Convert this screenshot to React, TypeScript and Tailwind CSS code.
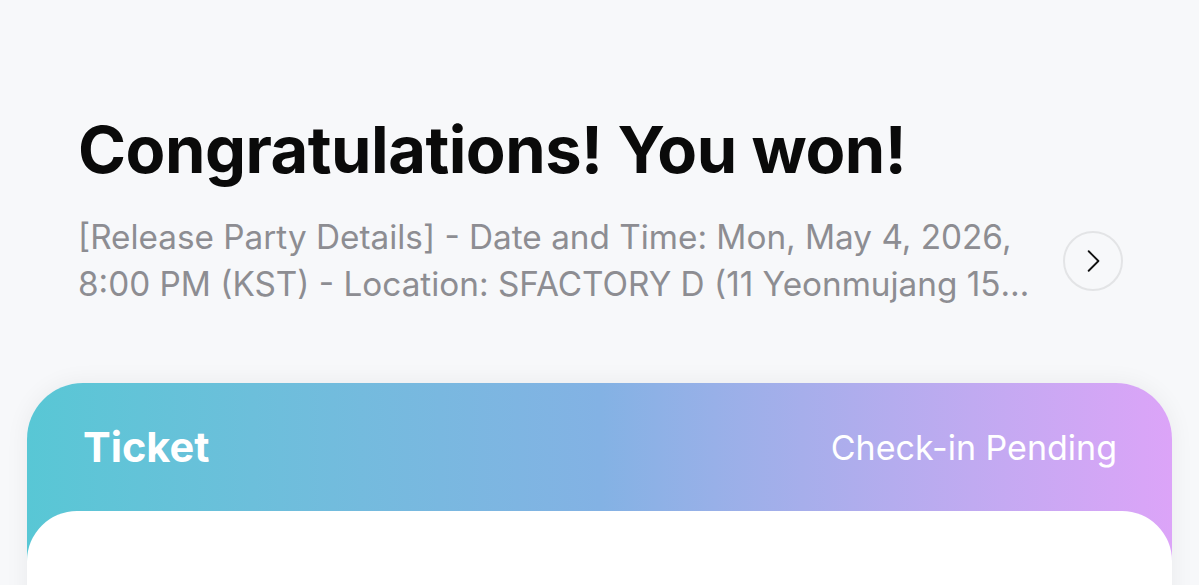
import React from "react";

export default function App() {
  return (
    <div className="w-[1199px] h-[585px] overflow-hidden bg-[#f7f8fa]" style={{ fontFamily: "Inter, 'Noto Sans', sans-serif" }}>
      <div className="pl-[78px] pr-[76px] pt-[108px]">
        <h1 className="text-[65px] leading-[84px] font-bold text-[#0a0a0a] tracking-[-0.5px]">Congratulations! You won!</h1>
        <div className="mt-[22px] flex items-center justify-between">
          <p className="w-[958px] text-[33.3px] leading-[47px] text-[#8d8d92] line-clamp-2">
            [Release Party Details] - Date and Time: Mon, May 4, 2026, 8:00 PM (KST) - Location: SFACTORY D (11 Yeonmujang 15-gil, Seongdong-gu, Seoul)
          </p>
          <button className="w-[60px] h-[60px] rounded-full border-2 border-[#e3e4e6] flex items-center justify-center text-[#111]">
            <svg width="26" height="26" viewBox="0 0 24 24" fill="none" stroke="currentColor" strokeWidth="1.7" strokeLinecap="round" strokeLinejoin="round">
              <path d="M8 3l9 9-9 9" />
            </svg>
          </button>
        </div>
      </div>
      <div className="mx-[27px] mt-[75px] rounded-t-[56px] bg-gradient-to-r from-[#58c7d5] via-[#83b2e4] to-[#dca4f8] shadow-[0_0_24px_rgba(0,0,0,0.06)]">
        <div className="h-[128px] flex items-center justify-between pl-[56px] pr-[55px]">
          <span className="text-[41.5px] font-bold text-white">Ticket</span>
          <span className="text-[34px] text-white">Check-in Pending</span>
        </div>
        <div className="h-[200px] bg-white rounded-t-[50px]" />
      </div>
    </div>
  );
}
